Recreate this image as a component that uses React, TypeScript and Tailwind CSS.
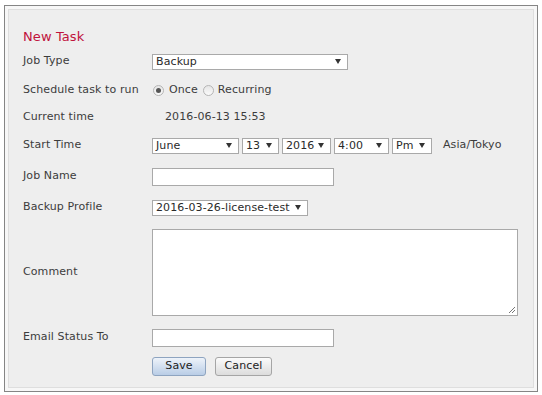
import type { ReactNode } from 'react';

const FONT = { fontFamily: '"DejaVu Sans", Verdana, sans-serif' };

function Arrow() {
  return (
    <svg width="6" height="5" viewBox="0 0 6 5" className="shrink-0" aria-hidden>
      <path d="M0 0h6L3 5z" fill="#333" />
    </svg>
  );
}

function Select({ value, width }: { value: string; width: string }) {
  return (
    <div
      className={`flex h-[16px] items-center justify-between border border-[#a9a9a9] bg-white pl-[3px] pr-[6px] text-[11px] leading-none text-[#2a2a2a] ${width}`}
    >
      <span>{value}</span>
      <Arrow />
    </div>
  );
}

function Radio({ checked }: { checked?: boolean }) {
  return (
    <span className="flex h-[11px] w-[11px] items-center justify-center rounded-full border border-[#b5b5b5] bg-gradient-to-b from-[#e6e6e6] to-[#fafafa]">
      {checked && <span className="h-[5px] w-[5px] rounded-full bg-[#555]" />}
    </span>
  );
}

function Row({ label, height, children }: { label: string; height: string; children?: ReactNode }) {
  return (
    <div className={`flex items-center pt-[1px] ${height}`}>
      <div className="w-[129px] shrink-0">{label}</div>
      <div className="flex items-center">{children}</div>
    </div>
  );
}

export default function App() {
  return (
    <div className="h-[395px] w-[542px] bg-white pl-[4px] pt-[5px]" style={FONT}>
      <div className="h-[387px] w-[534px] border border-[#858585] bg-[#f7f7f7] p-[3px]">
        <div className="h-full border border-[#dedede] bg-[#eeeeee] pl-[14px] pt-[17px] text-[11px] tracking-[0.1px] text-[#3c3c3c]">
          <div className="flex h-[20px] items-center text-[13px] text-[#c0123c]">New Task</div>

          <Row label="Job Type" height="h-[28px]">
            <Select value="Backup" width="w-[196px]" />
          </Row>

          <Row label="Schedule task to run" height="h-[30px]">
            <div className="flex items-center pl-[1px]">
              <Radio checked />
              <span className="ml-[5px]">Once</span>
              <span className="ml-[5px]"><Radio /></span>
              <span className="ml-[4px]">Recurring</span>
            </div>
          </Row>

          <Row label="Current time" height="h-[24px]">
            <span className="pl-[13px]">2016-06-13 15:53</span>
          </Row>

          <Row label="Start Time" height="h-[32px]">
            <div className="flex items-center gap-[3px]">
              <Select value="June" width="w-[87px]" />
              <Select value="13" width="w-[37px]" />
              <Select value="2016" width="w-[49px]" />
              <Select value="4:00" width="w-[55px]" />
              <Select value="Pm" width="w-[40px]" />
              <span className="ml-[8px]">Asia/Tokyo</span>
            </div>
          </Row>

          <Row label="Job Name" height="h-[30px]">
            <div className="h-[18px] w-[182px] border border-[#a9a9a9] bg-white" />
          </Row>

          <Row label="Backup Profile" height="h-[32px]">
            <Select value="2016-03-26-license-test" width="w-[156px]" />
          </Row>

          <Row label="Comment" height="h-[98px]">
            <div className="relative h-[87px] w-[366px] border border-[#a9a9a9] bg-white">
              <svg width="9" height="9" viewBox="0 0 9 9" className="absolute bottom-[1px] right-[1px]" aria-hidden>
                <path d="M8 2L2 8M8 5L5 8" stroke="#777" strokeWidth="1" />
              </svg>
            </div>
          </Row>

          <Row label="Email Status To" height="h-[32px]">
            <div className="h-[18px] w-[182px] border border-[#a9a9a9] bg-white" />
          </Row>

          <div className="flex h-[26px] items-center gap-[9px] pl-[129px] pt-[1px]">
            <button className="flex h-[19px] w-[54px] items-center justify-center rounded-[3px] border border-[#8ea4c0] bg-gradient-to-b from-[#eef3fa] to-[#b9cde6] text-[11px] text-[#222]">
              Save
            </button>
            <button className="flex h-[19px] w-[57px] items-center justify-center rounded-[3px] border border-[#a5a5a5] bg-gradient-to-b from-[#fbfbfb] to-[#dcdcdc] text-[11px] text-[#222]">
              Cancel
            </button>
          </div>
        </div>
      </div>
    </div>
  );
}
